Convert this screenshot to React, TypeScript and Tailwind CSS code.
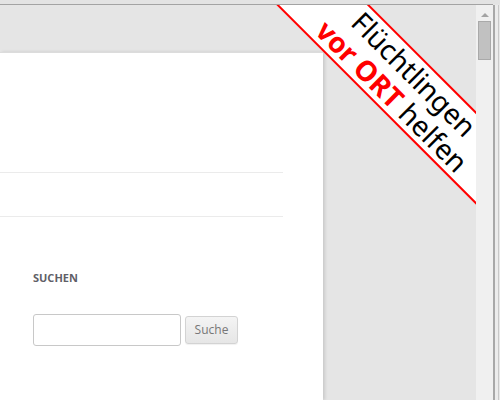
export default function App() {
  return (
    <div className="w-[500px] h-[400px] flex flex-col overflow-hidden bg-[#e5e5e5] font-['Open_Sans',sans-serif]">
      <div className="h-[4px] bg-[#e3e3e3]" />
      <div className="h-px bg-[#a3a3a3] mr-[7px]" />
      <div className="flex flex-1 min-h-0">
        <div className="relative flex-1 overflow-hidden flex flex-col bg-[#e5e5e5]">
          <div className="h-[47px] shrink-0" />
          <div className="flex-1 w-[323px] bg-white border-t border-[#dcdcdc] shadow-[2px_0_3px_rgba(0,0,0,0.12)]">
            <div className="h-[120px] mr-[40px] border-b border-[#ebebeb]" />
            <div className="h-[44px] mr-[40px] border-b border-[#ebebeb]" />
            <div className="pl-[33px] pt-[53px]">
              <h3 className="text-[11px] leading-[16px] font-bold uppercase text-[#5f6067]">Suchen</h3>
              <div className="mt-[28px] flex items-center gap-[4px]">
                <input
                  type="text"
                  className="w-[148px] h-[32px] rounded-[3px] border border-[#c8c8c8] bg-white outline-none"
                />
                <button className="w-[53px] h-[28px] rounded-[3px] border border-[#d3d3d3] bg-gradient-to-b from-[#f4f4f4] to-[#e6e6e6] text-[12px] text-[#777] shadow-[0_1px_1px_rgba(0,0,0,0.06)]">
                  Suche
                </button>
              </div>
            </div>
          </div>

          {/* corner ribbon */}
          <div className="absolute left-[191px] top-[45px] w-[420px] h-[66px] rotate-45 bg-white border-y-2 border-[#ff0000] flex flex-col items-center justify-center pl-[6px] font-['Noto_Sans',sans-serif] text-[28px] leading-[31px] text-black">
            <span>Flüchtlingen</span>
            <span>
              <span className="font-bold text-[#ff0000]">vor ORT</span> helfen
            </span>
          </div>
        </div>

        <div className="w-[17px] bg-[#f0f0f0] flex flex-col items-center">
          <div className="mt-[8px] w-0 h-0 border-x-[4px] border-x-transparent border-b-[4px] border-b-[#a3a3a3]" />
          <div className="mt-[4px] w-[13px] h-[39px] bg-[#c1c1c1] border border-[#a9a9a9]" />
        </div>
        <div className="w-[7px] flex">
          <div className="w-[2px] bg-[#a8a8a8]" />
          <div className="w-[3px] bg-[#ececec]" />
          <div className="w-px bg-[#c8c8c8]" />
          <div className="flex-1 bg-[#e8e8e8]" />
        </div>
      </div>
    </div>
  );
}
